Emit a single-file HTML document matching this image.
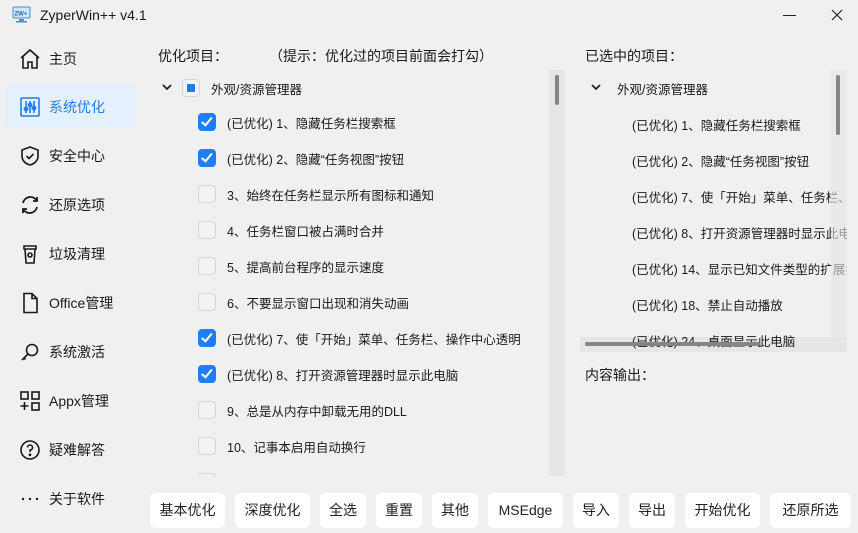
<!DOCTYPE html>
<html><head><meta charset="utf-8"><style>
*{margin:0;padding:0;box-sizing:border-box}
body{width:858px;height:533px;background:#f0f0f0;font-family:"Liberation Sans","Noto Sans CJK SC",sans-serif;color:#1a1a1a;position:relative;overflow:hidden;font-size:13px}
.abs{position:absolute}
.nav{position:absolute;left:5px;width:131px;height:44px;border-radius:6px}
.nav svg{position:absolute;left:14px;top:12px}
.nav span{position:absolute;left:44px;top:13px;font-size:14px}
.cb{position:absolute;left:198px;width:18px;height:18px;border-radius:4px;border:1.5px solid #d6d6d6;background:#f3f3f3}
.cb.on{background:#1f7ef5;border-color:#1f7ef5}
.cb.on::after{content:"";position:absolute;left:4.5px;top:1px;width:4px;height:8.5px;border:solid #fff;border-width:0 2px 2px 0;transform:rotate(40deg)}
.row{position:absolute;left:227px;font-size:12.5px;white-space:nowrap}
.rrow{position:absolute;left:52px;font-size:12.5px;white-space:nowrap}
.btn{position:absolute;top:493px;height:35px;background:#fff;border-radius:6px;font-size:14px;text-align:center;line-height:35px;color:#222}
</style></head><body>
<svg class="abs" style="left:12px;top:6px" width="19" height="18" viewBox="0 0 19 18"><rect x="1" y="1" width="17" height="11" rx="1" fill="#cfe4f7" stroke="#4a90d9"/><text x="2.5" y="9.5" font-size="6" font-family="Liberation Sans" fill="#2a6db5" font-weight="bold">ZW+</text><rect x="7" y="13" width="5" height="2" fill="#4a90d9"/><rect x="4" y="15" width="11" height="1.5" fill="#4a90d9"/></svg>
<div class="abs" style="left:40px;top:7px;font-size:14px">ZyperWin++ v4.1</div>
<div class="abs" style="left:783px;top:15px;width:13px;height:1px;background:#222"></div>
<svg class="abs" style="left:831px;top:9px" width="12" height="12"><path d="M1 1L11 11M11 1L1 11" stroke="#222" stroke-width="1.2"/></svg>

<div class="nav" style="top:36px"><svg width="22" height="22" viewBox="0 0 22 22" fill="none" stroke="#1a1a1a" stroke-width="1.6"><path d="M2 10L11 2L20 10M4 8.5V20H9V14H13V20H18V8.5"/></svg><span>主页</span></div>
<div class="nav" style="top:84px;background:#e4f0fb"><svg width="22" height="22" viewBox="0 0 22 22" fill="none" stroke="#1f7ef5" stroke-width="1.6"><rect x="2" y="2" width="18" height="18" rx="1"/><path d="M7 5V17M11 5V17M15 5V17"/><circle cx="7" cy="13" r="1.6" fill="#1f7ef5"/><circle cx="11" cy="9" r="1.6" fill="#1f7ef5"/><circle cx="15" cy="12" r="1.6" fill="#1f7ef5"/></svg><span style="color:#1f7ef5">系统优化</span></div>
<div class="nav" style="top:133px"><svg width="22" height="22" viewBox="0 0 22 22" fill="none" stroke="#1a1a1a" stroke-width="1.6"><path d="M11 2L19 5V11C19 16 15 19 11 20C7 19 3 16 3 11V5Z"/><path d="M7.5 11L10 13.5L14.5 9"/></svg><span>安全中心</span></div>
<div class="nav" style="top:182px"><svg width="22" height="22" viewBox="0 0 22 22" fill="none" stroke="#1a1a1a" stroke-width="1.8"><path d="M4 9A7.5 7.5 0 0 1 18 7M18 13A7.5 7.5 0 0 1 4 15"/><path d="M18 3V7H14M4 19V15H8"/></svg><span>还原选项</span></div>
<div class="nav" style="top:231px"><svg width="22" height="22" viewBox="0 0 22 22" fill="none" stroke="#1a1a1a" stroke-width="1.6"><path d="M5 3H17V6H5ZM6 6L7 20H15L16 6"/><circle cx="11" cy="12" r="2"/></svg><span>垃圾清理</span></div>
<div class="nav" style="top:280px"><svg width="22" height="22" viewBox="0 0 22 22" fill="none" stroke="#1a1a1a" stroke-width="1.6"><path d="M5 1.5H13L18 6.5V20.5H5ZM13 1.5V6.5H18"/></svg><span>Office管理</span></div>
<div class="nav" style="top:329px"><svg width="22" height="22" viewBox="0 0 22 22" fill="none" stroke="#1a1a1a" stroke-width="1.6"><circle cx="13" cy="9" r="5.5"/><path d="M9 13L3 19M5 17L6.5 18.5"/></svg><span>系统激活</span></div>
<div class="nav" style="top:378px"><svg width="22" height="22" viewBox="0 0 22 22" fill="none" stroke="#1a1a1a" stroke-width="1.6"><rect x="2" y="2" width="7" height="7"/><rect x="13" y="2" width="7" height="7"/><rect x="13" y="13" width="7" height="7"/><path d="M5.5 12V20M1.5 16H9.5"/></svg><span>Appx管理</span></div>
<div class="nav" style="top:427px"><svg width="22" height="22" viewBox="0 0 22 22" fill="none" stroke="#1a1a1a" stroke-width="1.6"><circle cx="11" cy="11" r="9"/><path d="M8.5 8.5A2.5 2.5 0 1 1 11 11V13"/><circle cx="11" cy="15.8" r=".6" fill="#1a1a1a"/></svg><span>疑难解答</span></div>
<div class="nav" style="top:476px"><svg width="22" height="22" viewBox="0 0 22 22" fill="#1a1a1a"><circle cx="4" cy="11" r="1.2"/><circle cx="11" cy="11" r="1.2"/><circle cx="18" cy="11" r="1.2"/></svg><span>关于软件</span></div>

<div class="abs" style="left:158px;top:46px;font-size:14px">优化项目：</div>
<div class="abs" style="left:269px;top:46px;font-size:14px">（提示：优化过的项目前面会打勾）</div>
<div class="abs" style="left:549px;top:70px;width:16px;height:406px;background:#e6e6e6"></div>
<div class="abs" style="left:555px;top:75px;width:4px;height:30px;border-radius:2px;background:#858585"></div>
<svg class="abs" style="left:162px;top:83px" width="10" height="8"><path d="M1 2L5 6L9 2" stroke="#222" stroke-width="1.8" fill="none"/></svg>
<div class="abs" style="left:182px;top:79px;width:18px;height:18px;border-radius:4px;border:1.5px solid #d6d6d6;background:#f3f3f3"><div style="position:absolute;left:3.5px;top:3.5px;width:8px;height:8px;background:#1f7ef5"></div></div>
<div class="row" style="left:211px;top:79px">外观/资源管理器</div>
<div style="position:absolute;left:0;top:0;width:549px;height:476px;overflow:hidden">
<div class="cb on" style="top:113px"></div><div class="row" style="top:113px">(已优化) 1、隐藏任务栏搜索框</div>
<div class="cb on" style="top:149px"></div><div class="row" style="top:149px">(已优化) 2、隐藏“任务视图”按钮</div>
<div class="cb" style="top:185px"></div><div class="row" style="top:185px">3、始终在任务栏显示所有图标和通知</div>
<div class="cb" style="top:221px"></div><div class="row" style="top:221px">4、任务栏窗口被占满时合并</div>
<div class="cb" style="top:257px"></div><div class="row" style="top:257px">5、提高前台程序的显示速度</div>
<div class="cb" style="top:293px"></div><div class="row" style="top:293px">6、不要显示窗口出现和消失动画</div>
<div class="cb on" style="top:329px"></div><div class="row" style="top:329px">(已优化) 7、使「开始」菜单、任务栏、操作中心透明</div>
<div class="cb on" style="top:365px"></div><div class="row" style="top:365px">(已优化) 8、打开资源管理器时显示此电脑</div>
<div class="cb" style="top:401px"></div><div class="row" style="top:401px">9、总是从内存中卸载无用的DLL</div>
<div class="cb" style="top:437px"></div><div class="row" style="top:437px">10、记事本启用自动换行</div>
<div class="cb" style="top:473px"></div>
</div>

<div class="abs" style="left:585px;top:46px;font-size:14px">已选中的项目：</div>
<div style="position:absolute;left:580px;top:70px;width:267px;height:282px;overflow:hidden">
<div class="abs" style="left:251px;top:0;width:16px;height:267px;background:#e6e6e6"></div>
<div class="abs" style="left:0;top:267px;width:267px;height:15px;background:#e6e6e6"></div>
<svg class="abs" style="left:11px;top:13px" width="10" height="8"><path d="M1 2L5 6L9 2" stroke="#222" stroke-width="1.8" fill="none"/></svg>
<div class="rrow" style="left:37px;top:9px">外观/资源管理器</div>
<div class="rrow" style="top:45px">(已优化) 1、隐藏任务栏搜索框</div>
<div class="rrow" style="top:81px">(已优化) 2、隐藏“任务视图”按钮</div>
<div class="rrow" style="top:117px">(已优化) 7、使「开始」菜单、任务栏、操作中心透明</div>
<div class="rrow" style="top:153px">(已优化) 8、打开资源管理器时显示此电脑</div>
<div class="rrow" style="top:189px">(已优化) 14、显示已知文件类型的扩展名</div>
<div class="rrow" style="top:225px">(已优化) 18、禁止自动播放</div>
<div class="rrow" style="top:261px">(已优化) 24、桌面显示此电脑</div>
<div class="abs" style="left:251px;top:0;width:16px;height:267px;background:rgba(235,235,235,.6)"></div>
</div>
<div class="abs" style="left:836px;top:75px;width:4px;height:60px;border-radius:2px;background:#858585"></div>
<div class="abs" style="left:585px;top:342px;width:175px;height:4px;border-radius:2px;background:#858585"></div>
<div class="abs" style="left:585px;top:365px;font-size:14px">内容输出：</div>

<div class="btn" style="left:150px;width:75px">基本优化</div>
<div class="btn" style="left:235px;width:75px">深度优化</div>
<div class="btn" style="left:320px;width:46px">全选</div>
<div class="btn" style="left:376px;width:46px">重置</div>
<div class="btn" style="left:432px;width:46px">其他</div>
<div class="btn" style="left:488px;width:75px">MSEdge</div>
<div class="btn" style="left:573px;width:46px">导入</div>
<div class="btn" style="left:629px;width:46px">导出</div>
<div class="btn" style="left:685px;width:75px">开始优化</div>
<div class="btn" style="left:770px;width:81px">还原所选</div>
</body></html>
